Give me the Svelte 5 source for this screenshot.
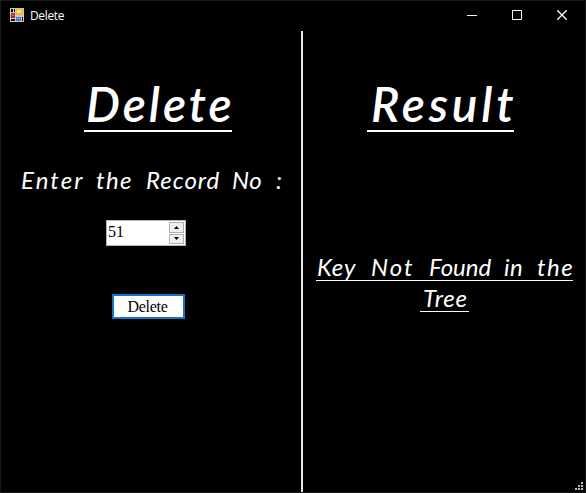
<script>
  let value = $state(51);
  const label = [
    { t: 'Enter', w: 75, s: 2.1 },
    { t: 'the', w: 50, s: 1.4 },
    { t: 'Record', w: 86, s: 1 },
    { t: 'No', w: 44, s: 0.5 },
    { t: ':', w: 10, s: 0 }
  ];
  const line1 = [
    { t: 'Key', w: 54, s: 0.9 },
    { t: 'Not', w: 58, s: 2 },
    { t: 'Found', w: 75, s: 0 },
    { t: 'in', w: 33, s: 0.5 },
    { t: 'the', w: 36, s: 1.5 }
  ];
</script>

<div class="window">
  <header>
    <svg class="app" width="14" height="14" viewBox="0 0 14 14" shape-rendering="crispEdges">
      <path fill="#c9c9c9" d="M0 0h14v14H0z" />
      <path fill="#160d08" d="M1 1h2v3H1zM4 1h1v3H4zM1 11h4v2H1zM12 9h1v4h-1z" />
      <path fill="#f0b92e" d="M6 1h7v6H6z" />
      <path fill="#ffe37a" d="M7 2h4v3H7z" />
      <path fill="#a32b22" d="M1 5h4v5H1z" />
      <path fill="#dc5a44" d="M2 6h2v2H2z" />
      <path fill="#427bc4" d="M6 9h5v4H6z" />
      <path fill="#8bb6ed" d="M7 10h3v1H7z" />
      <path fill="#311" d="M3 11h1v2H3z" />
    </svg>
    <span class="title">Delete</span>
    <div class="controls">
      <svg width="10" height="10"><path d="M0 5.5h10" stroke="#fff" /></svg>
      <svg width="10" height="10"><path d="M.5.5h9v9h-9z" stroke="#fff" fill="none" /></svg>
      <svg width="10" height="10"><path d="M.3.3l9.4 9.4M9.7.3L.3 9.7" stroke="#fff" stroke-width="1.3" /></svg>
    </div>
  </header>
  <main>
    <section class="left">
      <h1 class="del">Delete</h1>
      <p class="label">
        {#each label as p}<span style:width="{p.w}px" style:letter-spacing="{p.s}px">{p.t}</span>{/each}
      </p>
      <div class="spinner">
        <span class="value">{value}</span>
        <div class="arrows">
          <button aria-label="Increase" onclick={() => value++}><svg width="5" height="3"><path d="M0 3L2.5 0L5 3z" /></svg></button>
          <button aria-label="Decrease" onclick={() => value--}><svg width="5" height="3"><path d="M0 0L2.5 3L5 0z" /></svg></button>
        </div>
      </div>
      <button class="action">Delete</button>
    </section>
    <section class="right">
      <h1 class="res">Result</h1>
      <p class="line one">
        {#each line1 as p}<span style:width="{p.w}px" style:letter-spacing="{p.s}px">{p.t}</span>{/each}
      </p>
      <p class="line two">Tree</p>
    </section>
  </main>
  <svg class="grip" width="8" height="8" fill="#bdbdbd" shape-rendering="crispEdges">
    <path d="M6 0h2v2H6zM3 3h2v2H3zM6 3h2v2H6zM0 6h2v2H0zM3 6h2v2H3zM6 6h2v2H6z" />
  </svg>
</div>

<style>
  .window {
    position: relative;
    box-sizing: border-box;
    width: 586px;
    height: 493px;
    background: #000;
    border: 1px solid #191919;
    color: #fff;
    overflow: hidden;
  }
  header {
    height: 30px;
    display: flex;
    align-items: center;
    padding: 0 18px 2px 9px;
    box-sizing: border-box;
  }
  .title {
    font: 12px/16px 'Open Sans', sans-serif;
    margin: 2px 0 0 6px;
    letter-spacing: -0.35px;
  }
  .controls {
    display: flex;
    gap: 35px;
    margin-left: auto;
  }
  .controls svg { display: block; }
  main { display: flex; height: 461px; }
  .left {
    width: 300px;
    border-right: 2px solid #e8e8e8;
    display: flex;
    flex-direction: column;
    align-items: flex-start;
  }
  .right { flex: 1; }
  h1, p { margin: 0; white-space: nowrap; font-family: Lato, sans-serif; font-style: italic; box-sizing: border-box; }
  h1 {
    margin-top: 49px;
    height: 52px;
    font-size: 48px;
    line-height: 48px;
    font-weight: 600;
    border-bottom: 2px solid #fff;
  }
  .del { margin-left: 83px; width: 148px; padding-left: 2px; letter-spacing: 2.9px; }
  .res { margin-left: 64px; width: 147px; padding-left: 4px; letter-spacing: 3.8px; }
  .label {
    margin: 32px 0 0 20px;
    display: flex;
    height: 32px;
    font-size: 24px;
    line-height: 32px;
  }
  .spinner {
    margin: 24px 0 0 105px;
    width: 80px;
    height: 26px;
    box-sizing: border-box;
    border: 1px solid #b5b5b5;
    background: #fff;
    color: #000;
    display: flex;
    justify-content: space-between;
  }
  .value { font: 16px/22px 'Liberation Serif', serif; padding-left: 1px; }
  .arrows { display: flex; flex-direction: column; gap: 1px; padding: 1px; }
  .arrows button {
    width: 15px;
    height: 11px;
    box-sizing: border-box;
    border: 1px solid #b0b0b0;
    background: #efefef;
    padding: 0;
    display: flex;
    align-items: center;
    justify-content: center;
  }
  .action {
    margin: 48px 0 0 111px;
    width: 73px;
    height: 25px;
    box-sizing: border-box;
    border: 2px solid #1674c4;
    background: #fff;
    color: #000;
    padding: 0 2px 0 0;
    font: 16px/21px 'Liberation Serif', serif;
    letter-spacing: -0.3px;
  }
  .line {
    height: 27px;
    font-size: 24px;
    line-height: 26px;
    border-bottom: 1px solid #fff;
  }
  .one { display: flex; width: 257px; margin: 122px 0 0 13px; padding-left: 1px; }
  .two { width: 49px; margin: 4px 0 0 117px; padding-left: 3px; letter-spacing: 0.8px; }
  .line span, .label span { flex: none; }
  .grip { position: absolute; right: 2px; bottom: 2px; }
</style>
